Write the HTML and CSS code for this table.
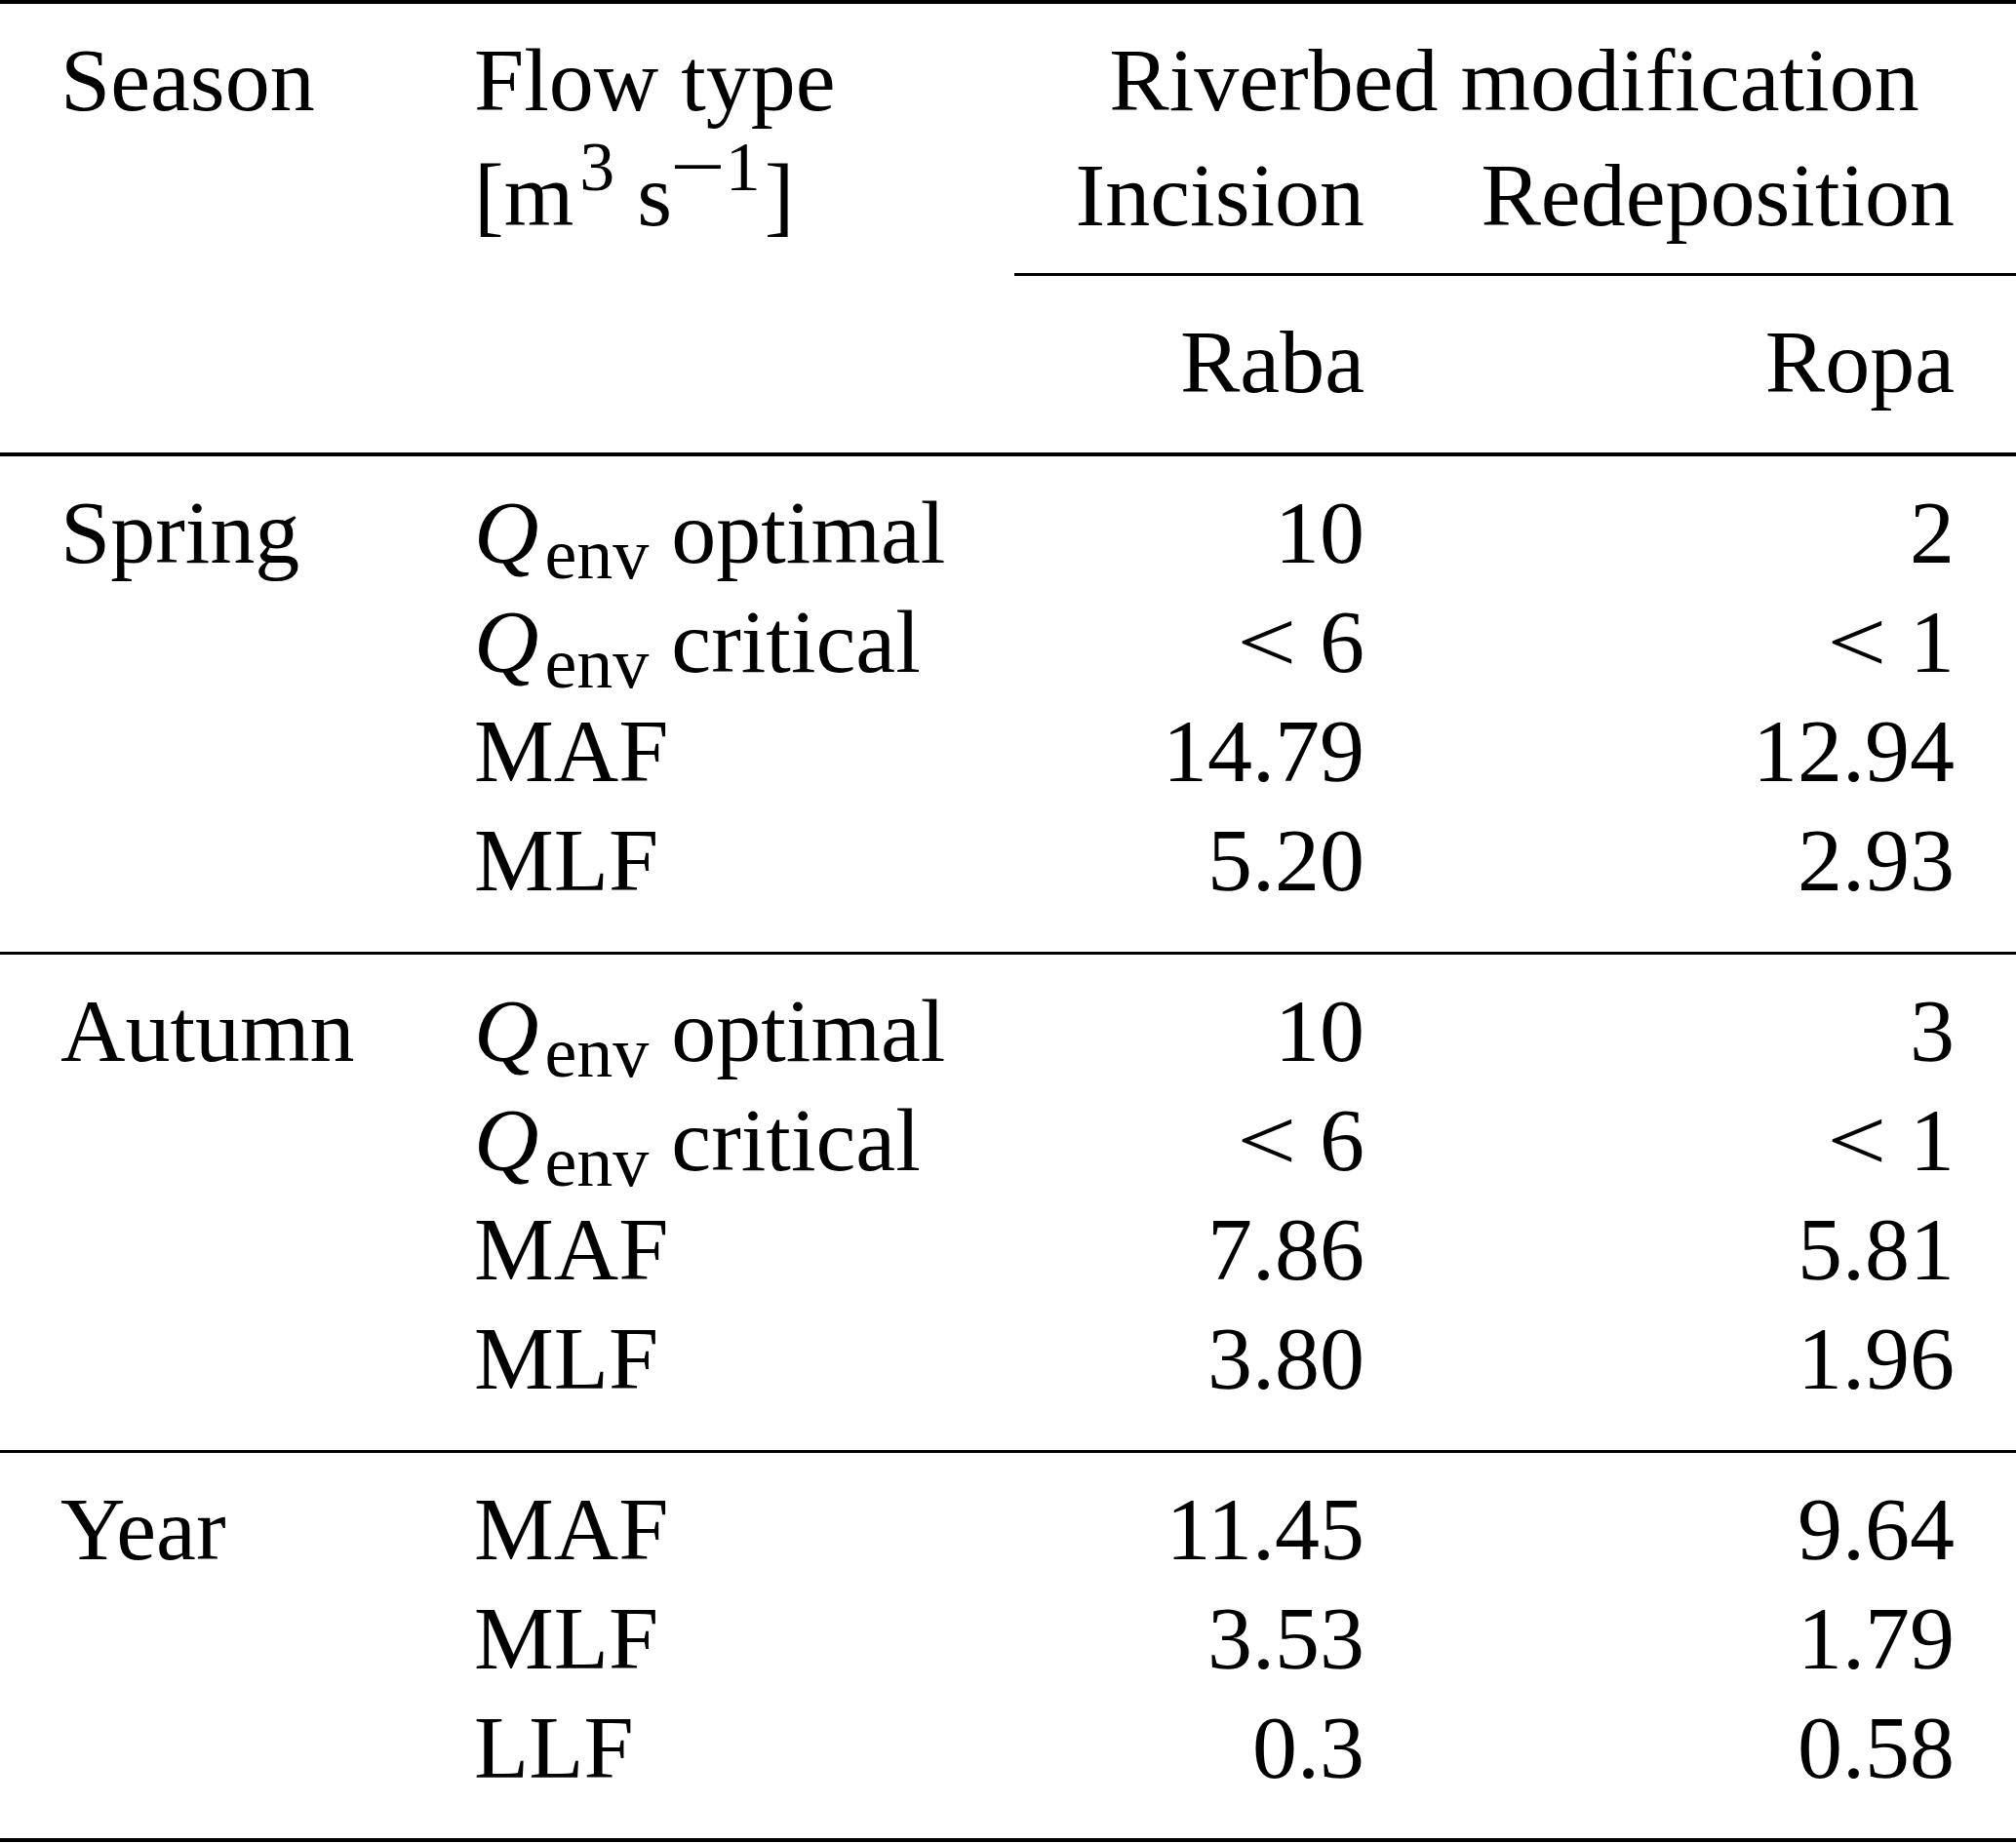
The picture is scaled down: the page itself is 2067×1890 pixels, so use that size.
FILE: index.html
```html
<!DOCTYPE html>
<html>
<head>
<meta charset="utf-8">
<link rel="stylesheet" href="styles.css">
</head>
<body>
<div class="table">
  <div class="head">
    <div class="row">
      <div class="c1">Season</div>
      <div class="c2">Flow type</div>
      <div class="span">Riverbed modification</div>
    </div>
    <div class="row row-units">
      <div class="c1"></div>
      <div class="c2">[m<span class="sup sup-first">3</span> s<span class="sup sup-last"><span class="minus">−</span>1</span>]</div>
      <div class="c3">Incision</div>
      <div class="c4">Redeposition</div>
    </div>
    <div class="row cmid-row"><div class="cmid"></div></div>
    <div class="row row-river">
      <div class="c1"></div>
      <div class="c2"></div>
      <div class="c3">Raba</div>
      <div class="c4">Ropa</div>
    </div>
  </div>

  <div class="section">
    <div class="row">
      <div class="c1">Spring</div>
      <div class="c2"><span class="q">Q</span><span class="sub">env</span> optimal</div>
      <div class="c3">10</div>
      <div class="c4">2</div>
    </div>
    <div class="row">
      <div class="c1"></div>
      <div class="c2"><span class="q">Q</span><span class="sub">env</span> critical</div>
      <div class="c3"><span class="lt">&lt;</span>6</div>
      <div class="c4"><span class="lt">&lt;</span>1</div>
    </div>
    <div class="row">
      <div class="c1"></div>
      <div class="c2">MAF</div>
      <div class="c3">14.79</div>
      <div class="c4">12.94</div>
    </div>
    <div class="row">
      <div class="c1"></div>
      <div class="c2">MLF</div>
      <div class="c3">5.20</div>
      <div class="c4">2.93</div>
    </div>
  </div>

  <div class="section">
    <div class="row">
      <div class="c1">Autumn</div>
      <div class="c2"><span class="q">Q</span><span class="sub">env</span> optimal</div>
      <div class="c3">10</div>
      <div class="c4">3</div>
    </div>
    <div class="row">
      <div class="c1"></div>
      <div class="c2"><span class="q">Q</span><span class="sub">env</span> critical</div>
      <div class="c3"><span class="lt">&lt;</span>6</div>
      <div class="c4"><span class="lt">&lt;</span>1</div>
    </div>
    <div class="row">
      <div class="c1"></div>
      <div class="c2">MAF</div>
      <div class="c3">7.86</div>
      <div class="c4">5.81</div>
    </div>
    <div class="row">
      <div class="c1"></div>
      <div class="c2">MLF</div>
      <div class="c3">3.80</div>
      <div class="c4">1.96</div>
    </div>
  </div>

  <div class="section last">
    <div class="row">
      <div class="c1">Year</div>
      <div class="c2">MAF</div>
      <div class="c3">11.45</div>
      <div class="c4">9.64</div>
    </div>
    <div class="row">
      <div class="c1"></div>
      <div class="c2">MLF</div>
      <div class="c3">3.53</div>
      <div class="c4">1.79</div>
    </div>
    <div class="row">
      <div class="c1"></div>
      <div class="c2">LLF</div>
      <div class="c3">0.3</div>
      <div class="c4">0.58</div>
    </div>
  </div>
</div>
</body>
</html>
```

FILE: styles.css
```css
html, body {
  margin: 0;
  padding: 0;
  background: #ffffff;
}

body {
  font-family: "Liberation Serif", "Times New Roman", serif;
  font-size: 92px;
  color: #000000;
}

.table {
  width: 2067px;
  border-top: 4px solid #000000;
}

.row {
  display: grid;
  grid-template-columns: 424px 616px 420px 607px;
  height: 112px;
  line-height: 112px;
  white-space: nowrap;
}

.c1,
.c2 {
  padding-left: 62px;
}

.c3 {
  padding-right: 61px;
  text-align: right;
}

.c4 {
  padding-right: 63px;
  text-align: right;
}

.span {
  grid-column: 3 / 5;
  text-align: center;
  padding: 0 63px 0 61px;
}

.head {
  padding-top: 22px;
  padding-bottom: 37px;
  border-bottom: 4px solid #000000;
}

.row-units {
  margin-top: 6px;
}

.cmid-row {
  height: 3px;
  margin-top: 24px;
}

.cmid {
  grid-column: 3 / 5;
  height: 3px;
  background: #000000;
}

.row-river {
  margin-top: 32px;
}

.section {
  padding: 22px 0 38px;
  border-bottom: 3px solid #000000;
}

.section.last {
  padding-bottom: 37px;
  border-bottom-width: 4px;
}

.sup {
  font-size: 72px;
  line-height: 0;
  vertical-align: 36px;
}

.sup-first {
  margin-left: 6px;
}

.sup-last {
  margin-right: 4px;
}

.minus {
  display: inline-block;
  transform: scaleX(1.4);
  margin: 0 8px 0 6px;
}

.sub {
  font-size: 74px;
  line-height: 0;
  vertical-align: -16px;
  margin-left: 6px;
}

.q {
  font-style: italic;
}

.lt {
  display: inline-block;
  transform: scaleX(1.18);
  margin-right: 28px;
}
```
